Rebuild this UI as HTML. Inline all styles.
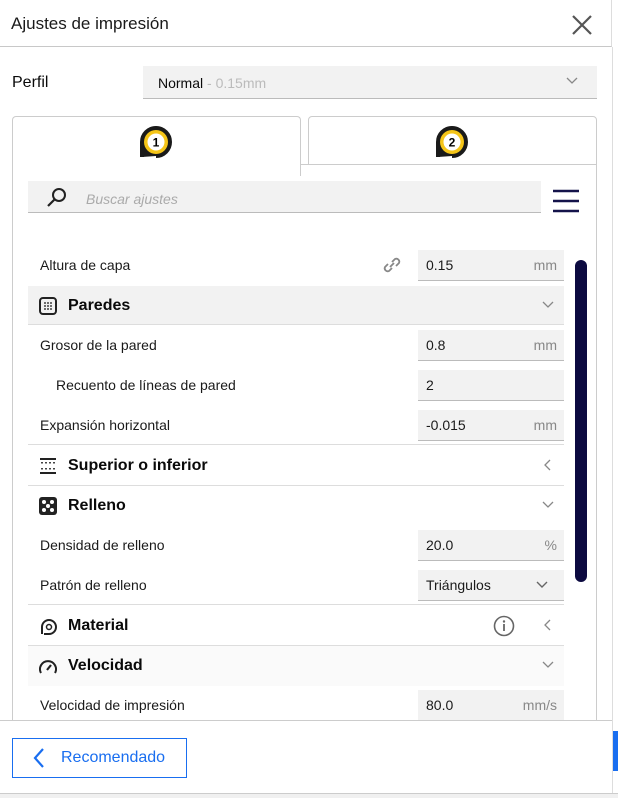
<!DOCTYPE html>
<html><head><meta charset="utf-8"><style>
*{box-sizing:border-box;margin:0;padding:0}
body{width:618px;height:798px;background:#fff;font-family:"Liberation Sans",sans-serif;color:#0a0a0a;position:relative;overflow:hidden;font-size:14px}
.a{position:absolute}
.row{position:absolute;left:28px;width:536px;height:40px;display:flex;align-items:center}
.lbl{padding-left:12px;font-size:14px;color:#1a1a1a}
.inp{position:absolute;left:390px;top:5px;width:146px;height:31px;background:#f2f2f2;border-bottom:1px solid #bbb;font-size:14px;padding-left:8px;line-height:30px;color:#1a1a1a}
.inp .u{position:absolute;right:7px;top:0;color:#888}
.hdr{font-weight:bold;font-size:16px;border-bottom:1px solid #ddd}
.hdr .ic{position:absolute;left:11px;top:11px;width:18px;height:18px}
.hdr .t{position:absolute;left:40px;top:11px}
.chev{position:absolute;right:10px;top:11px}
</style></head><body>
<div class="a" style="left:0;top:0;width:612px;height:47px;border-bottom:1px solid #c8c8c8;border-right:1px solid #ddd"></div>
<div class="a" style="left:11px;top:14px;font-size:17px;color:#1a1a1a">Ajustes de impresión</div>
<svg class="a" style="left:571px;top:14px" width="22" height="22"><path d="M2 2L20 20M20 2L2 20" stroke="#555" stroke-width="2.2"/></svg>
<div class="a" style="left:612px;top:47px;width:1px;height:746px;background:#ddd"></div>
<div class="a" style="left:12px;top:74px;font-size:16px">Perfil</div>
<div class="a" style="left:143px;top:66px;width:454px;height:33px;background:#f2f2f2;border-bottom:1px solid #bbb"></div>
<div class="a" style="left:158px;top:75px;font-size:14px">Normal <span style="color:#bbb">- 0.15mm</span></div>
<svg class="a" style="left:566px;top:77px" width="12" height="8"><path d="M1 1L6 6L11 1" stroke="#888" fill="none" stroke-width="1.3"/></svg>
<div class="a" style="left:12px;top:116px;width:289px;height:60px;border:1px solid #ccc;border-bottom:none;border-radius:4px 4px 0 0;background:#fff"></div>
<div class="a" style="left:308px;top:116px;width:289px;height:49px;border:1px solid #ccc;border-radius:4px 4px 0 0;background:#fff"></div>
<div class="a" style="left:300px;top:164px;width:297px;height:1px;background:#ccc"></div>
<div class="a" style="left:12px;top:165px;width:1px;height:556px;background:#ccc"></div>
<div class="a" style="left:596px;top:165px;width:1px;height:556px;background:#ccc"></div>
<svg class="a" style="left:138px;top:124px" width="38" height="34"><path d="M4 33V18A14 14 0 1 1 18 32" stroke="#1a1a1a" stroke-width="4" fill="#1a1a1a"/><circle cx="18" cy="18" r="12" fill="#f5c518"/><circle cx="18" cy="18" r="8.5" fill="#fff"/><text x="18" y="22.5" font-size="12" font-weight="bold" text-anchor="middle" font-family="Liberation Sans">1</text></svg>
<svg class="a" style="left:434px;top:124px" width="38" height="34"><path d="M4 33V18A14 14 0 1 1 18 32" stroke="#1a1a1a" stroke-width="4" fill="#1a1a1a"/><circle cx="18" cy="18" r="12" fill="#f5c518"/><circle cx="18" cy="18" r="8.5" fill="#fff"/><text x="18" y="22.5" font-size="12" font-weight="bold" text-anchor="middle" font-family="Liberation Sans">2</text></svg>
<div class="a" style="left:28px;top:181px;width:513px;height:32px;background:#f2f2f2;border-bottom:1px solid #bbb"></div>
<svg class="a" style="left:46px;top:187px" width="22" height="22"><circle cx="13" cy="8" r="6" stroke="#222" stroke-width="2" fill="none"/><path d="M9 12L2 19" stroke="#222" stroke-width="2.2"/></svg>
<div class="a" style="left:86px;top:191px;font-style:italic;color:#aaa;font-size:14px">Buscar ajustes</div>
<svg class="a" style="left:553px;top:189px" width="26" height="24"><path d="M0 2H26M0 12H26M0 22H26" stroke="#14134a" stroke-width="2.5"/></svg>
<div class="a" style="left:575px;top:260px;width:12px;height:322px;background:#0c0a40;border-radius:6px"></div>
<div class="row" style="top:245px"><span class="lbl">Altura de capa</span>
<svg class="a" style="left:353px;top:10px" width="22" height="20"><path d="M9 12L13 8M7 9L4 12A3 3 0 0 0 8 16L11 13M15 11L18 8A3 3 0 0 0 14 4L11 7" stroke="#888" stroke-width="1.8" fill="none"/></svg>
<div class="inp">0.15<span class="u">mm</span></div></div>
<div class="row hdr" style="top:286px;background:#f2f2f2;height:39px"><svg class="ic" viewBox="0 0 18 18"><rect x="1" y="1" width="16" height="16" rx="3" stroke="#222" stroke-width="2" fill="none"/><g fill="#444"><circle cx="6" cy="6" r="1"/><circle cx="9" cy="6" r="1"/><circle cx="12" cy="6" r="1"/><circle cx="6" cy="9" r="1"/><circle cx="9" cy="9" r="1"/><circle cx="12" cy="9" r="1"/><circle cx="6" cy="12" r="1"/><circle cx="9" cy="12" r="1"/><circle cx="12" cy="12" r="1"/></g></svg><span class="t">Paredes</span><svg class="chev" width="12" height="16"><path d="M1 5L6 10L11 5" stroke="#888" fill="none" stroke-width="1.3"/></svg></div>
<div class="row" style="top:325px"><span class="lbl">Grosor de la pared</span><div class="inp">0.8<span class="u">mm</span></div></div>
<div class="row" style="top:365px"><span class="lbl" style="padding-left:28px">Recuento de líneas de pared</span><div class="inp">2</div></div>
<div class="row" style="top:405px;border-bottom:1px solid #ddd"><span class="lbl">Expansión horizontal</span><div class="inp">-0.015<span class="u">mm</span></div></div>
<div class="row hdr" style="top:446px"><svg class="ic" viewBox="0 0 18 18"><path d="M1 2H17M1 16H17" stroke="#222" stroke-width="2"/><g fill="#444"><rect x="2" y="5" width="2" height="1.5"/><rect x="6" y="5" width="2" height="1.5"/><rect x="10" y="5" width="2" height="1.5"/><rect x="14" y="5" width="2" height="1.5"/><rect x="2" y="11" width="2" height="1.5"/><rect x="6" y="11" width="2" height="1.5"/><rect x="10" y="11" width="2" height="1.5"/><rect x="14" y="11" width="2" height="1.5"/></g></svg><span class="t">Superior o inferior</span><svg class="chev" width="12" height="16"><path d="M8 3L3 8L8 13" stroke="#888" fill="none" stroke-width="1.3"/></svg></div>
<div class="row hdr" style="top:486px;border-bottom:none"><svg class="ic" viewBox="0 0 18 18"><rect x="0" y="0" width="18" height="18" rx="3" fill="#222"/><g fill="#fff"><circle cx="5" cy="5" r="2"/><circle cx="13" cy="5" r="2"/><circle cx="9" cy="9" r="2"/><circle cx="5" cy="13" r="2"/><circle cx="13" cy="13" r="2"/></g></svg><span class="t">Relleno</span><svg class="chev" width="12" height="16"><path d="M1 5L6 10L11 5" stroke="#888" fill="none" stroke-width="1.3"/></svg></div>
<div class="row" style="top:525px"><span class="lbl">Densidad de relleno</span><div class="inp">20.0<span class="u">%</span></div></div>
<div class="row" style="top:565px;border-bottom:1px solid #ddd"><span class="lbl">Patrón de relleno</span><div class="inp">Triángulos<svg style="position:absolute;right:16px;top:11px" width="12" height="8"><path d="M1 1L6 6L11 1" stroke="#666" fill="none" stroke-width="1.4"/></svg></div></div>
<div class="row hdr" style="top:606px"><svg class="ic" viewBox="0 0 18 18"><path d="M3 17V10A7 7 0 1 1 10 17H5" stroke="#222" stroke-width="2" fill="none"/><circle cx="10" cy="10" r="2.5" stroke="#222" stroke-width="1.5" fill="none"/></svg><span class="t">Material</span>
<svg class="a" style="left:465px;top:9px" width="22" height="22"><circle cx="11" cy="11" r="9.5" stroke="#666" stroke-width="1.6" fill="none"/><circle cx="11" cy="6.5" r="1.2" fill="#666"/><path d="M11 9V16" stroke="#666" stroke-width="1.8"/></svg>
<svg class="chev" width="12" height="16"><path d="M8 3L3 8L8 13" stroke="#888" fill="none" stroke-width="1.3"/></svg></div>
<div class="row hdr" style="top:646px;background:#fafafa;border-bottom:none"><svg class="ic" viewBox="0 0 18 18"><path d="M2 16A8 8 0 1 1 16 16" stroke="#222" stroke-width="2" fill="none"/><path d="M8 13L12 8" stroke="#222" stroke-width="2.2"/></svg><span class="t">Velocidad</span><svg class="chev" width="12" height="16"><path d="M1 5L6 10L11 5" stroke="#888" fill="none" stroke-width="1.3"/></svg></div>
<div class="row" style="top:685px"><span class="lbl">Velocidad de impresión</span><div class="inp">80.0<span class="u">mm/s</span></div></div>
<div class="a" style="left:0;top:720px;width:612px;height:78px;background:#fff;border-top:1px solid #ccc"></div>
<div class="a" style="left:12px;top:738px;width:175px;height:40px;border:1px solid #196ef0"></div>
<svg class="a" style="left:32px;top:747px" width="14" height="22"><path d="M11 2L3 11L11 20" stroke="#196ef0" stroke-width="2.2" fill="none"/></svg>
<div class="a" style="left:61px;top:749px;color:#196ef0;font-size:16px">Recomendado</div>
<div class="a" style="left:613px;top:731px;width:5px;height:40px;background:#196ef0"></div>
<div class="a" style="left:0;top:793px;width:618px;height:5px;background:#f0f0f0;border-top:1px solid #ccc"></div>
</body></html>
